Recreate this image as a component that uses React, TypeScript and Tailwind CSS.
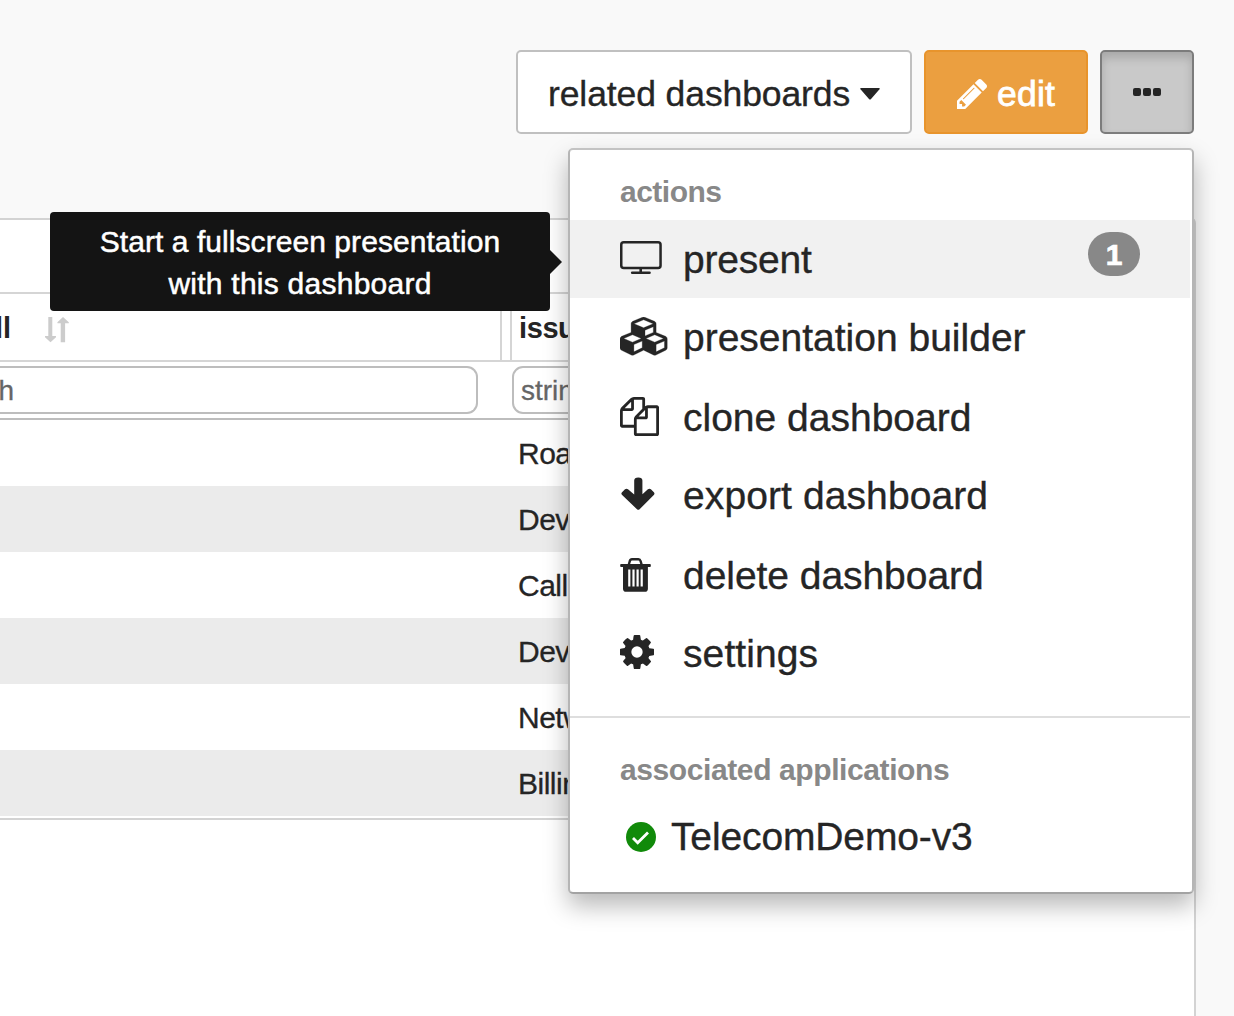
import React from "react";

const PencilIcon = () => (
  <svg viewBox="128 149 1515 1515" className="size-[30px] shrink-0" fill="currentColor">
    <path d="M491 1536l91-91-235-235-91 91v107h128v128h107zM1014 608q0-22-22-22-10 0-17 7l-542 542q-7 7-7 17 0 22 22 22 10 0 17-7l542-542q7-7 7-17zM960 416l416 416-832 832h-416v-416zM1643 512q0 53-37 90l-166 166-416-416 166-165q36-38 90-38 53 0 91 38l235 234q37 39 37 91z" />
  </svg>
);

const MonitorIcon = () => (
  <svg width="42" height="34" viewBox="0 0 42 34" fill="none" stroke="currentColor">
    <rect x="1.25" y="1.25" width="39.3" height="25.8" rx="2.5" strokeWidth="2.5" />
    <path d="M20.7 27v5" strokeWidth="2.6" />
    <path d="M12.2 31.7h17.3" strokeWidth="2.6" strokeLinecap="round" />
  </svg>
);

const CubesIcon = () => (
  <svg width="50" height="40" viewBox="0 0 2304 1872" preserveAspectRatio="none" fill="currentColor">
    <path d="M640 1632l384-192v-314l-384 164v342zm-64-454l404-173-404-173-404 173zm1088 454l384-192v-314l-384 164v342zm-64-454l404-173-404-173-404 173zm-448-293l384-165v-266l-384 164v267zm-64-379l441-189-441-189-441 189zm1088 518v416q0 36-19 67t-52 47l-448 224q-25 14-57 14t-57-14l-448-224q-4-2-7-4-2 2-7 4l-448 224q-25 14-57 14t-57-14l-448-224q-33-16-52-47t-19-67v-416q0-38 21.5-70t56.5-48l434-186v-400q0-38 21.5-70t56.5-48l448-192q23-10 50-10t50 10l448 192q35 16 56.5 48t21.5 70v400l434 186q36 16 57 48t21 70z" stroke="currentColor" strokeWidth="14" />
  </svg>
);

const FilesIcon = () => (
  <svg width="39" height="39" viewBox="0 0 1792 1792" fill="currentColor">
    <path d="M1696 384q40 0 68 28t28 68v1216q0 40-28 68t-68 28h-960q-40 0-68-28t-28-68v-288h-544q-40 0-68-28t-28-68v-672q0-40 20-88t48-76l408-408q28-28 76-48t88-20h416q40 0 68 28t28 68v328q68-40 128-40h416zm-544 213l-299 299h299v-299zm-640-384l-299 299h299v-299zm196 647l316-316v-416h-384v416q0 40-28 68t-68 28h-416v640h512v-256q0-40 20-88t48-76zm956 804v-1152h-384v416q0 40-28 68t-68 28h-416v640h896z" />
  </svg>
);

const ArrowIcon = () => (
  <svg width="36" height="34" viewBox="0 0 36 34" fill="currentColor">
    <path d="M14.2 3.5Q14.2.5 18.3.5t4.100 3v13.700l5.500-4.900q1.600-1.200 3 0l3 2.900q1.200 1.500-.1 2.800L19.600 32.200q-1.300 1.200-2.600 0L2.100 18.100q-1.400-1.400-.1-2.900l3-2.900q1.500-1.200 3 0l6.200 5.200z" />
  </svg>
);

const TrashIcon = () => (
  <svg width="31" height="34" viewBox="0 0 31 34">
    <path d="M8.800 6.500l1-3.300Q10.300 1.300 12 1.300h6.400q1.700 0 2.200 1.900l1 3.300" fill="none" stroke="currentColor" strokeWidth="2.4" />
    <path
      fill="currentColor"
      fillRule="evenodd"
      d="M1 6h29q.8 0 .8 1v1q0 .9-.8.9h-2.100v21.800q0 3.100-3 3.100H6.100Q3 33.800 3 30.700V8.900H1q-.8 0-.8-.9V7q0-1 .8-1zM8.200 11.500v17h2.200v-17zM12.400 11.500v17h2.200v-17zM16.500 11.500v17h2.200v-17zM20.600 11.500v17h2.200v-17z"
    />
  </svg>
);

const GearIcon = () => (
  <svg width="34" height="34" viewBox="128 128 1536 1536" fill="currentColor">
    <path d="M1152 896q0-106-75-181t-181-75-181 75-75 181 75 181 181 75 181-75 75-181zm512-109v222q0 12-8 23t-20 13l-185 28q-19 54-39 91 35 50 107 138 10 12 10 25t-9 23q-27 37-99 108t-94 71q-12 0-26-9l-138-108q-44 23-91 38-16 136-29 186-7 28-36 28h-222q-14 0-24.500-8.500t-11.500-21.500l-28-184q-49-16-90-37l-141 107q-10 9-25 9-14 0-25-11-126-114-165-168-7-10-7-23 0-12 8-23 15-21 51-66.500t54-70.500q-27-50-41-99l-183-27q-13-2-21-12.500t-8-23.500v-222q0-12 8-23t19-13l186-28q14-46 39-92-40-57-107-138-10-12-10-24 0-10 9-23 26-36 98.500-107.500t94.500-71.500q13 0 26 10l138 107q44-23 91-38 16-136 29-186 7-28 36-28h222q14 0 24.500 8.500t11.500 21.500l28 184q49 16 90 37l142-107q9-9 24-9 13 0 25 10 129 119 165 170 7 8 7 22 0 12-8 23-15 21-51 66.500t-54 70.500q26 50 41 98l183 28q13 2 21 12.500t8 23.500z" />
  </svg>
);

const SortIcon = () => (
  <svg width="24" height="26" viewBox="0 0 24 26" fill="#cccccc" className="absolute left-[45px] top-[23px]">
    <path d="M3.300 0h4v19H11v1.200L5.500 25.300 0 20.200V19h3.300z" />
    <path d="M15.700 25.300h4.400V6.200h3.700V5.200L18 0l-5.600 5.200v1h3.300z" />
  </svg>
);

const items = [
  { label: "present", icon: <MonitorIcon />, row: "h-[78px] bg-[#f1f1f1] pt-[14px]", pad: "pt-[7px]", spacing: "tracking-[-0.2px]", badge: "1" },
  { label: "presentation builder", icon: <CubesIcon />, row: "h-[80px] pt-[14px]", pad: "pt-[5px]", spacing: "tracking-[0px]" },
  { label: "clone dashboard", icon: <FilesIcon />, row: "h-[78px] pt-[14px]", pad: "pt-[5px]", spacing: "tracking-[0px]" },
  { label: "export dashboard", icon: <ArrowIcon />, row: "h-[80px] pt-[14px]", pad: "pt-[7px]", spacing: "tracking-[0.1px]" },
  { label: "delete dashboard", icon: <TrashIcon />, row: "h-[78px] pt-[14px]", pad: "pt-[8px]", spacing: "tracking-[-0.05px]" },
  { label: "settings", icon: <GearIcon />, row: "h-[84px] pt-[14px]", pad: "pt-[7px]", spacing: "tracking-[0.1px]" },
];

const rows = ["Roaming", "Device", "CallQuality", "Device", "Network", "Billing"];

function Toolbar() {
  return (
    <div className="flex h-[218px] items-start justify-end gap-3 pr-10 pt-[50px]">
      <button className="flex h-[84px] w-[396px] items-center rounded-[5px] border-2 border-[#c0c0c0] bg-white pl-[30px] pt-[5px] text-[35.5px]">
        <span className="tracking-[-0.1px] [-webkit-text-stroke:0.35px_#252525]">related dashboards</span>
        <svg width="20" height="12" viewBox="0 0 20 12" className="mb-[1px] ml-[10px]" fill="#252525">
          <path d="M1 0h18q1.400 0.500.300 1.600L10.800 11.200q-.8.700-1.600 0L.7 1.600Q-.4.500 1 0z" />
        </svg>
      </button>
      <button className="flex h-[84px] w-[164px] items-center rounded-[5px] border-2 border-[#e8942c] bg-[#eb9f40] pl-[31px] pt-[5px] text-[35.500px] text-white">
        <span className="-mt-[1px]">
          <PencilIcon />
        </span>
        <span className="ml-[10px] tracking-[0.2px] [-webkit-text-stroke:0.8px_white]">edit</span>
      </button>
      <button className="flex h-[84px] w-[94px] items-center justify-center gap-[2px] rounded-[5px] border-2 border-[#7c7c7c] bg-[#c9c9c9] shadow-[inset_0_6px_10px_rgba(0,0,0,0.16)]">
        <i className="size-2 rounded-[2px] bg-[#252525]" />
        <i className="size-2 rounded-[2px] bg-[#252525]" />
        <i className="size-2 rounded-[2px] bg-[#252525]" />
      </button>
    </div>
  );
}

function DataTable() {
  return (
    <div className="h-[798px] w-[1196px] rounded-tr-[5px] border-r-2 border-t-2 border-[#d3d3d3] bg-white">
      <div className="mt-[72px] flex h-[70px] border-y-2 border-[#d5d5d5] text-[29px] font-bold">
        <div className="relative w-[502px] border-r-2 border-[#d5d5d5]">
          <span className="absolute right-[489px] top-[13px] whitespace-nowrap">call</span>
          <SortIcon />
        </div>
        <div className="ml-2 flex-1 border-l-2 border-[#d5d5d5] pl-[7px] pt-[13px] tracking-[-0.400px]">issue</div>
      </div>
      <div className="flex h-[58px] border-b-2 border-[#bdbdbd] pt-1 text-[28px] text-[#666] [-webkit-text-stroke:0.3px_#666]">
        <div className="relative h-12 w-[478px] rounded-r-[11px] border-y-2 border-r-2 border-[#bdbdbd]">
          <span className="absolute right-[462px] top-[2px]">search</span>
        </div>
        <div className="ml-[34px] h-12 flex-1 rounded-l-[11px] border-2 border-[#bdbdbd] pl-[7px] pt-[2px]">string</div>
      </div>
      <div className="border-b-2 border-[#d3d3d3] pb-[2px] text-[30px] [-webkit-text-stroke:0.3px_#252525]">
        {rows.map((label, i) => (
          <div key={i} className="flex h-[66px] items-center pl-[518px] tracking-[-0.5px] even:bg-[#ebebeb]">
            {label}
          </div>
        ))}
      </div>
    </div>
  );
}

function Menu() {
  return (
    <div className="absolute left-[568px] top-[148px] h-[746px] w-[626px] rounded-[5px] border-2 border-[#b5b5b5] border-b-[#a3a3a3] border-t-[#c3c3c3] bg-white pr-[2px] shadow-[0_12px_24px_rgba(0,0,0,0.28)]">
      <div className="h-[70px] pl-[50px] pt-[24px] text-[30px] font-bold leading-9 tracking-[-0.500px] text-[#888]">actions</div>
      {items.map((item) => (
        <div key={item.label} className={"relative flex pl-[50px] " + item.row}>
          <div className={"w-[63px] " + item.pad}>{item.icon}</div>
          <span className={"whitespace-nowrap text-[39px] leading-[52px] [-webkit-text-stroke:0.35px_#252525] " + item.spacing}>{item.label}</span>
          {item.badge && (
            <span className="absolute right-[50px] top-[12px] flex h-11 w-[52px] items-center justify-center rounded-[22px] bg-[#888] text-[30px] font-bold text-white [-webkit-text-stroke:0.7px_white]">
              {item.badge}
            </span>
          )}
        </div>
      ))}
      <div className="mt-[18px] border-t-2 border-[#dedede] pl-[50px] pt-[34px] text-[30px] font-bold leading-9 tracking-[-0.400px] text-[#888]">
        associated applications
      </div>
      <div className="mt-[23px] flex items-center pl-[56px]">
        <svg width="30" height="30" viewBox="0 0 30 30">
          <circle cx="15" cy="15" r="15" fill="#118a0a" />
          <path d="M7 16l4.700 4.700L22 10.500" fill="none" stroke="white" strokeWidth="2.800" />
        </svg>
        <span className="ml-[15px] text-[39px] leading-[52px] tracking-[-0.13px] [-webkit-text-stroke:0.35px_#252525]">TelecomDemo-v3</span>
      </div>
    </div>
  );
}

function Tooltip() {
  return (
    <div className="absolute left-[50px] top-[212px] h-[99px] w-[500px] rounded-[4px] bg-[#141414] pt-[9px] text-center text-[30px] leading-[42px] text-white [-webkit-text-stroke:0.5px_white]">
      <div className="tracking-[0.06px]">Start a fullscreen presentation</div>
      <div className="tracking-[0.25px]">with this dashboard</div>
      <i className="absolute left-full top-[38px] border-y-[12px] border-l-[12px] border-y-transparent border-l-[#141414]" />
    </div>
  );
}

export default function App() {
  return (
    <div className="relative h-[1016px] w-[1234px] overflow-hidden bg-[#f9f9f9] font-['Liberation_Sans',Arial,sans-serif] text-[#252525]">
      <Toolbar />
      <DataTable />
      <Menu />
      <Tooltip />
    </div>
  );
}
